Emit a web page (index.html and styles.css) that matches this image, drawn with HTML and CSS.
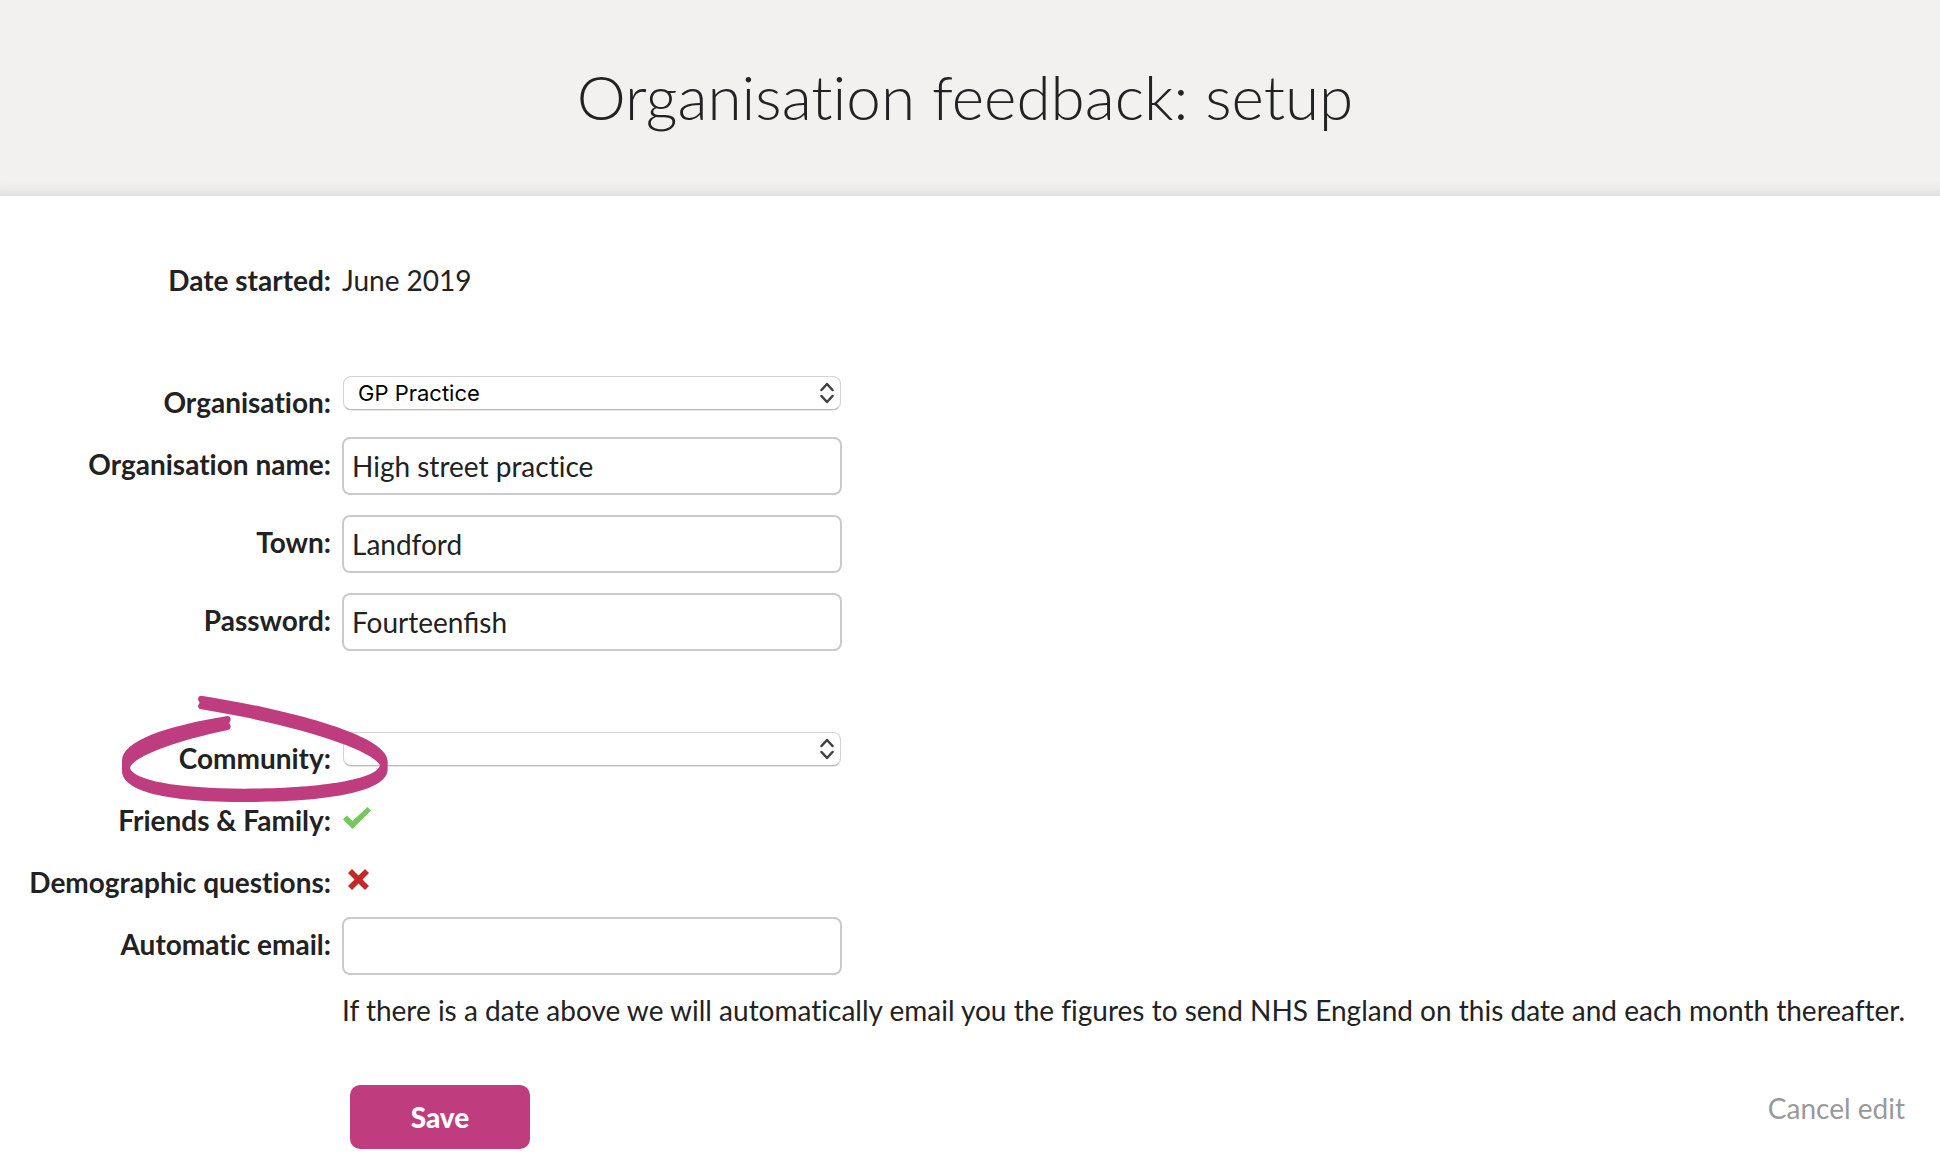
FILE: index.html
```html
<!DOCTYPE html>
<html lang="en">
<head>
    <meta charset="UTF-8">
    <meta name="viewport" content="width=device-width, initial-scale=1.0">
    <title>Organisation feedback: setup</title>
    <link rel="stylesheet" href="styles.css">
</head>
<body>
    <header class="page-header">
        <h1>Organisation feedback: setup</h1>
    </header>
    <form class="setup-form">
        <div class="row section">
            <span class="label">Date started:</span>
            <span class="value">June 2019</span>
        </div>
        <div class="row">
            <label class="label" for="organisation">Organisation:</label>
            <div class="select-wrap">
                <select id="organisation">
                    <option>GP Practice</option>
                </select>
                <svg class="arrows" viewBox="0 0 14 22" aria-hidden="true">
                    <path d="M1.500 8 7 2l5.500 6M1.500 14 7 20l5.500-6"/>
                </svg>
            </div>
        </div>
        <div class="row">
            <label class="label" for="name">Organisation name:</label>
            <input type="text" id="name" value="High street practice">
        </div>
        <div class="row">
            <label class="label" for="town">Town:</label>
            <input type="text" id="town" value="Landford">
        </div>
        <div class="row section">
            <label class="label" for="password">Password:</label>
            <input type="text" id="password" class="ligatures" value="Fourteenfish">
        </div>
        <div class="row community">
            <label class="label" for="community">Community:</label>
            <div class="select-wrap">
                <select id="community">
                    <option></option>
                </select>
                <svg class="arrows" viewBox="0 0 14 22" aria-hidden="true">
                    <path d="M1.500 8 7 2l5.500 6M1.500 14 7 20l5.500-6"/>
                </svg>
            </div>
            <!-- hand drawn ring around the label -->
            <svg class="ring" viewBox="0 0 960 420" aria-hidden="true">
                <path d="M304 47C560 88 863 164 863 244V268C863 334 690 366 435 366C200 366 66 334 66 272V242C66 182 200 138 382 108Q392 108 392 120L388 129L392 138Q392 148 384 150C210 186 92 236 90 264C98 300 230 326 435 326C650 326 830 300 840 256C820 210 590 134 304 88Q294 86 294 77L299 68L294 59Q294 47 304 47Z"/>
            </svg>
        </div>
        <div class="row">
            <span class="label">Friends &amp; Family:</span>
            <svg class="mark yes" viewBox="-1 0 30 28" role="img" aria-label="Yes">
                <path d="M0 12.500 4 8.500 9.500 14 24.500 0 28 3.500 9.500 22Z"/>
            </svg>
        </div>
        <div class="row">
            <span class="label">Demographic questions:</span>
            <svg class="mark no" viewBox="-1 0 30 28" role="img" aria-label="No">
                <path d="M5 4 9 0l6.500 6.500L22 0l4 4-6.500 6.500L26 17l-4 4-6.500-6.500L9 21l-4-4 6.500-6.500Z"/>
            </svg>
        </div>
        <div class="row">
            <label class="label" for="email">Automatic email:</label>
            <div class="field">
                <input type="text" id="email">
                <p class="note">If there is a date above we will automatically email you the figures to send NHS England on this date and each month thereafter.</p>
            </div>
        </div>
        <div class="actions">
            <button type="submit" class="save">Save</button>
            <a href="#" class="cancel">Cancel edit</a>
        </div>
    </form>
</body>
</html>
```
FILE: styles.css
```css
:root {
    --text-color: #222222;
    --header-bg: #f3f1f0;
    --accent-color: #bf3d7e;
    --border-color: #cacaca;
    --label-width: 331px;
}
* {
    box-sizing: border-box;
}
body {
    margin: 0;
    font-family: Lato, sans-serif;
    font-size: 28px;
    line-height: 42px;
    font-variant-ligatures: none;
    color: var(--text-color);
    background: #ffffff;
}
.page-header {
    padding: 56px 20px 60px 10px;
    text-align: center;
    background: var(--header-bg);
    box-shadow: inset 0 -16px 16px -16px rgba(0, 0, 0, 0.14);
}
h1 {
    margin: 0;
    font-size: 62px;
    font-weight: 300;
    line-height: 80px;
}
.setup-form {
    padding: 57px 0 24px;
}
.row {
    display: flex;
    align-items: flex-start;
    gap: 11px;
    min-height: 42px;
    margin-bottom: 20px;
}
.row.section {
    margin-bottom: 80px;
}
.label {
    flex: none;
    width: var(--label-width);
    padding-top: 6px;
    margin-bottom: -6px;
    text-align: right;
    font-weight: 700;
}
.value {
    padding-top: 6px;
    margin-bottom: -6px;
}
.field {
    flex: 1;
    min-width: 0;
}
input {
    display: block;
    width: 500px;
    height: 58px;
    padding: 0 8px;
    font: inherit;
    font-variant-ligatures: none;
    color: inherit;
    background: #ffffff;
    border: 2px solid var(--border-color);
    border-radius: 8px;
}
.ligatures {
    font-variant-ligatures: normal;
}
.select-wrap {
    position: relative;
    width: 500px;
    padding: 1px;
}
select {
    display: block;
    width: 100%;
    height: 34px;
    padding: 0 40px 0 14px;
    appearance: none;
    font-family: Inter, sans-serif;
    font-size: 22px;
    line-height: 32px;
    color: #000000;
    background: #ffffff;
    border: 1px solid #d4d4d4;
    border-bottom-color: #b8b8b8;
    border-radius: 8px;
    box-shadow: 0 1px 1px rgba(0, 0, 0, 0.1);
}
.arrows {
    position: absolute;
    top: 7px;
    right: 8px;
    width: 14px;
    height: 22px;
    fill: none;
    stroke: #404040;
    stroke-width: 2.5;
    stroke-linecap: round;
    stroke-linejoin: round;
    pointer-events: none;
}
.community {
    position: relative;
}
.ring {
    position: absolute;
    top: -51px;
    left: 100px;
    width: 320px;
    height: 140px;
    fill: var(--accent-color);
    pointer-events: none;
}
.mark {
    width: 30px;
    height: 28px;
    margin-top: 14px;
}
.yes {
    fill: #74c95c;
}
.no {
    fill: #c22a27;
}
.note {
    margin: 14px 20px 0 0;
}
.actions {
    display: flex;
    justify-content: space-between;
    align-items: flex-start;
    margin-top: 54px;
    padding: 0 35px 0 350px;
}
.save {
    width: 180px;
    height: 64px;
    font: inherit;
    font-weight: 900;
    color: #ffffff;
    background: var(--accent-color);
    border: 0;
    border-radius: 10px;
}
.cancel {
    padding-top: 2px;
    color: #999999;
    text-decoration: none;
}
```
